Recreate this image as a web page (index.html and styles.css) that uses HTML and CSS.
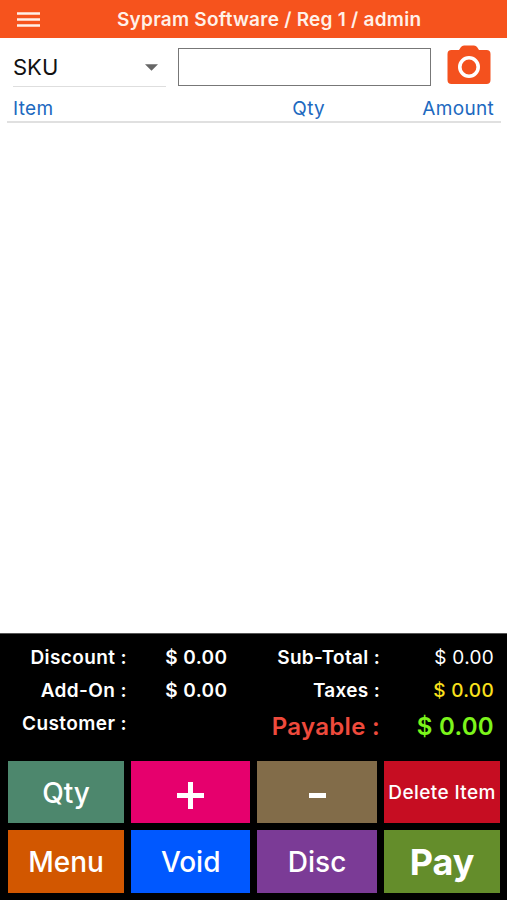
FILE: index.html
```
<!DOCTYPE html>
<html lang="en">
<head>
    <meta charset="UTF-8">
    <meta name="viewport" content="width=device-width, initial-scale=1.0">
    <title>Sypram Software</title>
    <link rel="stylesheet" href="styles.css">
</head>
<body>
    <header class="topbar">
        <svg class="burger" viewBox="0 0 23 15">
            <path d="M0 1.500h23M0 7.500h23M0 13.500h23" stroke="#fff0e8" stroke-width="2.600"/>
        </svg>
        <h1><span>Sypram Software / Reg 1 / admin</span></h1>
    </header>

    <div class="search">
        <div class="select">
            <span class="sku">SKU</span>
            <svg class="arrow" viewBox="0 0 12 6"><path d="M0 0h12L6 6z" fill="#666"/></svg>
        </div>
        <input type="text" class="code">
        <svg class="camera" viewBox="0 0 44 40">
            <path d="M4.500 5H12l2-3Q15 .5 17 .5h10Q29 .5 30 2l2 3h7.500Q43.500 5 43.500 9v26q0 4-4 4h-35q-4 0-4-4V9q0-4 4-4z" fill="#f4511e"/>
            <circle cx="22" cy="22" r="9.200" fill="none" stroke="#fff" stroke-width="3.600"/>
        </svg>
    </div>

    <div class="columns">
        <span>Item</span>
        <span class="qty">Qty</span>
        <span class="amount">Amount</span>
    </div>

    <main class="items"></main>

    <footer class="panel">
        <div class="totals">
            <div class="side left">
                <div class="line"><span class="label">Discount :</span><span class="value">$ 0.00</span></div>
                <div class="line"><span class="label">Add-On :</span><span class="value">$ 0.00</span></div>
                <div class="line"><span class="label">Customer :</span><span class="value"></span></div>
            </div>
            <div class="side right">
                <div class="line"><span class="label">Sub-Total :</span><span class="value subtotal">$ 0.00</span></div>
                <div class="line"><span class="label">Taxes :</span><span class="value taxes">$ 0.00</span></div>
                <div class="line payable"><span class="label">Payable :</span><span class="value">$ 0.00</span></div>
            </div>
        </div>
        <div class="touches">
            <button class="btn-qty"><span>Qty</span></button>
            <button class="btn-plus">
                <svg viewBox="0 0 27 27"><path d="M13.500 0v27M0 13.500h27" stroke="#fff" stroke-width="5"/></svg>
            </button>
            <button class="btn-minus">
                <svg viewBox="0 0 17 5"><path d="M0 2.500h17" stroke="#fff" stroke-width="5"/></svg>
            </button>
            <button class="btn-delete"><span>Delete Item</span></button>
            <button class="btn-menu"><span>Menu</span></button>
            <button class="btn-void"><span>Void</span></button>
            <button class="btn-disc"><span>Disc</span></button>
            <button class="btn-pay"><span>Pay</span></button>
        </div>
    </footer>
</body>
</html>
```

FILE: styles.css
```
*{
    padding: 0;
    margin: 0;
    box-sizing: border-box;
}
body{
    height: 100vh;
    display: flex;
    flex-direction: column;
    overflow: hidden;
    background-color: #fff;
    font-family: Inter, sans-serif;
    white-space: nowrap;
}
.topbar{
    height: 38px;
    padding-left: 17px;
    display: flex;
    align-items: center;
    background-color: #f6531d;
    color: #fff0e8;
}
.burger{
    width: 23px;
    height: 15px;
}
.topbar h1{
    flex: 1;
    padding-left: 77px;
    font-size: 19px;
    font-weight: 600;
    letter-spacing: 0.25px;
}
.search{
    height: 57px;
    padding: 8px 16px 0 13px;
    display: flex;
    align-items: flex-start;
}
.select{
    width: 153px;
    height: 41px;
    margin-right: 12px;
    padding: 2px 8px 0 0;
    display: flex;
    justify-content: space-between;
    align-items: center;
    border-bottom: 1px solid #dedede;
    font-size: 22px;
    color: #111;
}
.arrow{
    width: 13px;
    height: 7px;
}
.code{
    width: 253px;
    height: 38px;
    margin-top: 2px;
    border: 1px solid #777;
    outline: none;
}
.camera{
    width: 44px;
    height: 40px;
    margin: -1px 0 0 16px;
}
.columns{
    height: 28px;
    margin: 0 6px 0 7px;
    padding: 0 7px 0 6px;
    display: grid;
    grid-template-columns: 1fr 1fr 1fr;
    line-height: 27px;
    border-bottom: 2px solid #e0e0e0;
    font-size: 19px;
    letter-spacing: 0.3px;
    color: #2069bf;
}
.qty{
    padding-left: 119px;
}
.amount{
    text-align: right;
}
.items{
    flex: 1;
}
.panel{
    height: 267px;
    padding: 7px 7px 0 8px;
    border-top: 1px solid #555;
    background-color: #000;
    color: #fff;
}
.totals{
    height: 119.5px;
    display: flex;
    font-size: 19px;
    font-weight: 600;
    letter-spacing: 0.4px;
}
.left{
    width: 219.5px;
}
.right{
    width: 266.5px;
    letter-spacing: 0.3px;
}
.line{
    height: 33px;
    display: flex;
    align-items: center;
}
.label{
    width: 119px;
    text-align: right;
}
.right .label{
    width: 152.5px;
}
.value{
    flex: 1;
    text-align: right;
}
.subtotal{
    font-weight: 400;
}
.taxes{
    font-weight: 500;
    color: #fae01c;
}
.payable{
    height: 38px;
    font-size: 24px;
}
.payable .label{
    color: #ee4a3c;
}
.payable .value{
    color: #7cf51b;
}
.touches{
    display: grid;
    grid-template-columns: 116px 119px 119.5px 116px;
    grid-template-rows: 62.5px 62.5px;
    gap: 7.2px;
}
button{
    padding-top: 2px;
    display: flex;
    justify-content: center;
    align-items: center;
    border: none;
    outline: none;
    color: #fff;
    font-family: inherit;
    font-size: 28px;
    font-weight: 500;
}
.btn-qty{
    background-color: #4d876d;
}
.btn-plus{
    background-color: #e6006d;
}
.btn-plus svg{
    width: 27px;
    height: 27px;
    margin-top: 6px;
}
.btn-minus{
    background-color: #826c49;
}
.btn-minus svg{
    width: 17px;
    height: 5px;
    margin-top: 5px;
}
.btn-delete{
    background-color: #c60d22;
    font-size: 19px;
    letter-spacing: 0.4px;
}
.btn-menu{
    background-color: #d25700;
}
.btn-void{
    background-color: #0058ff;
}
.btn-disc{
    background-color: #7b3b96;
}
.btn-pay{
    background-color: #648d2b;
    font-size: 36px;
    font-weight: 700;
}
```
